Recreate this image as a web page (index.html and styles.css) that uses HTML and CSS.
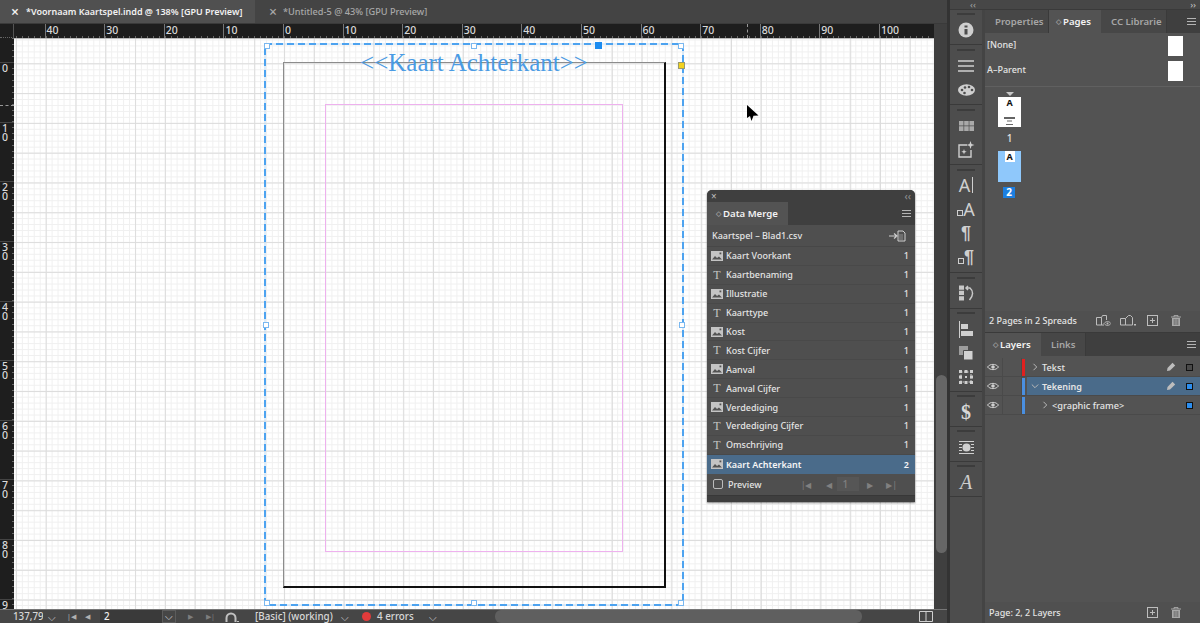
FILE: index.html
```html
<!DOCTYPE html>
<html lang="en">
<head>
    <meta charset="UTF-8">
    <title>Voornaam Kaartspel.indd</title>
    <link rel="stylesheet" href="styles.css">
</head>
<body>
    <svg class="defs" width="0" height="0">
        <symbol id="i-image" viewBox="0 0 12 10">
            <rect width="12" height="10" fill="#c4c4c4"/>
            <path d="M1 8.500 4 5l2 2 2-1.500 3 3z" fill="#535353"/>
            <rect x="8.500" y="1.500" width="1.800" height="1.800" fill="#535353"/>
        </symbol>
        <symbol id="i-eye" viewBox="0 0 12 8">
            <path d="M.5 4C3 .5 9 .5 11.500 4 9 7.500 3 7.500.5 4z" fill="none" stroke="#d0d0d0"/>
            <circle cx="6" cy="4" r="1.800" fill="#d0d0d0"/>
        </symbol>
        <symbol id="i-pen" viewBox="0 0 10 10">
            <path d="M1 9 1.500 6 6.500.8 9.200 3.500 4 8.500z" fill="#bdbdbd"/>
        </symbol>
        <symbol id="i-plus" viewBox="0 0 11 11">
            <rect x=".5" y=".5" width="10" height="10" fill="none" stroke="#bdbdbd"/>
            <path d="M5.500 3v5M3 5.500h5" stroke="#bdbdbd"/>
        </symbol>
        <symbol id="i-trash" viewBox="0 0 10 11">
            <path d="M0 2h10M3 2V.6h4V2" fill="none" stroke="#a8a8a8"/>
            <path d="M1 3h8v8H1z" fill="#a8a8a8"/>
            <path d="M3.200 4v6M5 4v6M6.800 4v6" stroke="#535353" stroke-width=".7"/>
        </symbol>
        <symbol id="i-chev" viewBox="0 0 6 8">
            <path d="M1.500 .8 4.700 4 1.500 7.200" fill="none" stroke="#b8b8b8"/>
        </symbol>
    </svg>

    <div class="app">
        <main class="doc">
            <div class="doc-tabs">
                <div class="doc-tab active"><span class="tab-x">×</span>*Voornaam Kaartspel.indd @ 138% [GPU Preview]</div>
                <div class="doc-tab"><span class="tab-x">×</span>*Untitled-5 @ 43% [GPU Preview]</div>
            </div>

            <div class="doc-body">
                <div class="doc-view">
                    <div class="ruler-top">
                        <div class="ruler-corner"></div>
                        <div class="ruler-marks">
                            <span>40</span><span>30</span><span>20</span><span>10</span><span>0</span>
                            <span>10</span><span>20</span><span>30</span><span>40</span><span>50</span>
                            <span>60</span><span>70</span><span>80</span><span>90</span><span>100</span>
                        </div>
                        <i class="ruler-cursor-x"></i>
                    </div>
                    <div class="doc-row">
                        <div class="ruler-left">
                            <span>0</span><span>10</span><span>20</span><span>30</span><span>40</span>
                            <span>50</span><span>60</span><span>70</span><span>80</span><span>90</span>
                            <i class="ruler-cursor-y"></i>
                        </div>
                        <div class="canvas">
                            <div class="page"></div>
                            <div class="margin-box"></div>
                            <div class="frame">
                                <svg class="frame-line" width="420" height="563">
                                    <rect x="1" y="1" width="418" height="561" fill="none" stroke="#bcdcf8" stroke-width="1"/>
                                    <rect x="1" y="1" width="418" height="561" fill="none" stroke="#4da3f0" stroke-width="2" stroke-dasharray="7 4"/>
                                </svg>
                                <div class="frame-text">&lt;&lt;Kaart Achterkant&gt;&gt;</div>
                                <i class="handle h-tl"></i><i class="handle h-tm"></i><i class="handle h-tr"></i>
                                <i class="handle h-ml"></i><i class="handle h-mr"></i>
                                <i class="handle h-bl"></i><i class="handle h-bm"></i><i class="handle h-br"></i>
                                <i class="handle-ref"></i>
                                <i class="handle-port"></i>
                            </div>
                            <svg class="cursor" width="12" height="17" viewBox="0 0 12 17"><path d="M0 0 11.500 10.500 6.500 10.800 4.500 16 3 11 0 13z" fill="#000"/></svg>

                            <section class="merge">
                                <div class="merge-title"><span class="x">×</span><span class="chev">‹‹</span></div>
                                <div class="panel-tabs">
                                    <div class="panel-tab active merge-tab"><span class="updown">◇</span>Data Merge</div>
                                    <div class="panel-menu"><b></b></div>
                                </div>
                                <div class="merge-file">
                                    <span>Kaartspel – Blad1.csv</span>
                                    <svg width="17" height="12" viewBox="0 0 17 12"><path d="M0 6h7M5 3.500 8 6 5 8.500" fill="none" stroke="#cfcfcf" stroke-width="1.200"/><path d="M9 1h5l2 2v8H9z" fill="none" stroke="#cfcfcf"/><path d="M10.500 5h4M10.500 7h4M10.500 9h4" stroke="#cfcfcf" stroke-dasharray="1 1"/></svg>
                                </div>
                                <div class="merge-row"><svg class="ic" width="12" height="10"><use href="#i-image"/></svg><span class="name">Kaart Voorkant</span><span>1</span></div>
                                <div class="merge-row"><span class="ic t">T</span><span class="name">Kaartbenaming</span><span>1</span></div>
                                <div class="merge-row"><svg class="ic" width="12" height="10"><use href="#i-image"/></svg><span class="name">Illustratie</span><span>1</span></div>
                                <div class="merge-row"><span class="ic t">T</span><span class="name">Kaarttype</span><span>1</span></div>
                                <div class="merge-row"><svg class="ic" width="12" height="10"><use href="#i-image"/></svg><span class="name">Kost</span><span>1</span></div>
                                <div class="merge-row"><span class="ic t">T</span><span class="name">Kost Cijfer</span><span>1</span></div>
                                <div class="merge-row"><svg class="ic" width="12" height="10"><use href="#i-image"/></svg><span class="name">Aanval</span><span>1</span></div>
                                <div class="merge-row"><span class="ic t">T</span><span class="name">Aanval Cijfer</span><span>1</span></div>
                                <div class="merge-row"><svg class="ic" width="12" height="10"><use href="#i-image"/></svg><span class="name">Verdediging</span><span>1</span></div>
                                <div class="merge-row"><span class="ic t">T</span><span class="name">Verdediging Cijfer</span><span>1</span></div>
                                <div class="merge-row"><span class="ic t">T</span><span class="name">Omschrijving</span><span>1</span></div>
                                <div class="merge-row selected"><svg class="ic" width="12" height="10"><use href="#i-image"/></svg><span class="name">Kaart Achterkant</span><span>2</span></div>
                                <div class="merge-preview">
                                    <i class="checkbox"></i><span class="preview-label">Preview</span>
                                    <div class="pager">
                                        <span class="pager-first">|◀</span><span>◀</span><span class="pager-num">1</span><span class="pager-next">▶</span><span>▶|</span>
                                    </div>
                                </div>
                                <div class="merge-grip"></div>
                            </section>
                        </div>
                    </div>
                </div>
                <div class="vscroll"><div class="vscroll-thumb"></div></div>
            </div>

            <footer class="status">
                <span class="zoom-val">137,79</span><span class="st-chev">⌵</span>
                <span class="st-nav first">|◀</span><span class="st-nav">◀</span>
                <span class="page-input">2</span><span class="page-drop">⌵</span>
                <span class="st-nav dim">▶</span><span class="st-nav dim">▶|</span>
                <svg class="gauge" width="14" height="12" viewBox="0 0 14 12"><path d="M1.500 11V7a4.500 4.500 0 0 1 9 0v4" fill="none" stroke="#c0c0c0" stroke-width="2"/><rect x="12" y="10" width="2" height="1" fill="#c0c0c0"/></svg>
                <span class="preflight-name">[Basic] (working)</span><span class="st-chev c2">⌵</span>
                <i class="err-dot"></i><span class="err-text">4 errors</span><span class="st-chev c3">⌵</span>
                <div class="hscroll"></div>
                <svg class="spread-ic" width="14" height="11" viewBox="0 0 14 11"><path d="M.5.5h13v10H.5zM7 .5v10" fill="none" stroke="#d0d0d0"/></svg>
            </footer>
        </main>

        <div class="dock-edge"></div>

        <aside class="dock">
            <div class="dock-top"><span class="chev-l">‹‹</span><span class="chev-r">››</span></div>
            <div class="dock-main">
                <nav class="strip">
                    <div class="group">
                        <div class="tool"><svg width="16" height="16" viewBox="0 0 16 16"><circle cx="8" cy="8" r="7.500" fill="#cfcfcf"/><path d="M6.500 3.500h3v2h-3zM6.500 7h3v5.500h-3z" fill="#4d4d4d"/></svg></div>
                    </div>
                    <div class="group">
                        <div class="tool"><svg width="16" height="12" viewBox="0 0 16 12"><path d="M0 1h16M0 6h16M0 11h16" stroke="#d0d0d0" stroke-width="1.600"/></svg></div>
                        <div class="tool"><svg width="17" height="12" viewBox="0 0 17 12"><ellipse cx="8.500" cy="6" rx="8.500" ry="5.800" fill="#cfcfcf"/><circle cx="4" cy="6" r="1.300" fill="#4d4d4d"/><circle cx="7" cy="3.500" r="1.300" fill="#4d4d4d"/><circle cx="11" cy="3" r="1.300" fill="#4d4d4d"/><circle cx="6.500" cy="9" r="1.300" fill="#4d4d4d"/><circle cx="14" cy="6" r="1.300" fill="#4d4d4d"/></svg></div>
                    </div>
                    <div class="group">
                        <div class="tool"><svg width="15" height="10" viewBox="0 0 15 10"><path d="M0 0h4.500v4.500H0zM5.200 0h4.500v4.500H5.200zM10.400 0H15v4.500h-4.600zM0 5.300h4.500V10H0zM5.200 5.300h4.500V10H5.200zM10.400 5.300H15V10h-4.600z" fill="#a9a9a9"/></svg></div>
                        <div class="tool up"><svg width="17" height="17" viewBox="0 0 17 17"><path d="M9 4H1v12h12V9" fill="none" stroke="#cfcfcf" stroke-width="1.400"/><path d="M12.500 0l1 3 3 1-3 1-1 3-1-3-3-1 3-1zM6 8l.7 2 2 .7-2 .7-.7 2-.7-2-2-.7 2-.7z" fill="#cfcfcf"/></svg></div>
                    </div>
                    <div class="group">
                        <div class="tool glyph a-bar up">A<i></i></div>
                        <div class="tool glyph small-a up"><b></b>A</div>
                        <div class="tool glyph pilcrow up">¶</div>
                        <div class="tool glyph small-a pil up"><b></b>¶</div>
                    </div>
                    <div class="group tight">
                        <div class="tool up"><svg width="15" height="16" viewBox="0 0 15 16"><path d="M0 .5h5v4.200H0zM0 5.800h5V10H0zM0 11.200h5v4.300H0z" fill="#c8c8c8"/><path d="M7 3h4c3.500 3 3.500 7.500-.5 12M9 1l-2 2 2 2" fill="none" stroke="#c8c8c8" stroke-width="1.500"/></svg></div>
                    </div>
                    <div class="group tight">
                        <div class="tool"><svg width="14" height="17" viewBox="0 0 14 17"><path d="M.5 0v17" stroke="#cfcfcf"/><path d="M2 3h7v5H2zM2 10h12v5H2z" fill="#cfcfcf"/></svg></div>
                        <div class="tool"><svg width="14" height="14" viewBox="0 0 14 14"><path d="M0 0h9v9H0z" fill="#9d9d9d"/><path d="M4.500 4.500H14V14H4.500z" fill="#d2d2d2" stroke="#4d4d4d"/></svg></div>
                        <div class="tool"><svg width="14" height="14" viewBox="0 0 14 14"><path d="M2 2h10v10H2z" fill="none" stroke="#cfcfcf" stroke-dasharray="1.500 1.500"/><path d="M0 0h3v3H0zM5.500 0h3v3h-3zM11 0h3v3h-3zM0 5.500h3v3H0zM11 5.500h3v3h-3zM0 11h3v3H0zM5.500 11h3v3h-3zM11 11h3v3h-3zM6 6h2v2H6z" fill="#cfcfcf"/></svg></div>
                    </div>
                    <div class="group tight">
                        <div class="tool glyph dollar">$</div>
                    </div>
                    <div class="group tight">
                        <div class="tool"><svg width="15" height="13" viewBox="0 0 15 13"><path d="M0 .5h15M0 12.500h15M0 3.500h3M12 3.500h3M0 6.500h3M12 6.500h3M0 9.500h3M12 9.500h3" stroke="#cfcfcf"/><circle cx="7.500" cy="6.500" r="4" fill="#cfcfcf"/></svg></div>
                    </div>
                    <div class="group tight">
                        <div class="tool glyph script">A</div>
                    </div>
                </nav>

                <div class="panels">
                    <section class="pages">
                        <div class="panel-tabs">
                            <div class="panel-tab w-props">Properties</div>
                            <div class="panel-tab active w-pages"><span class="updown">◇</span>Pages</div>
                            <div class="panel-tab w-cc">CC Librarie</div>
                            <div class="panel-menu"><b></b></div>
                        </div>
                        <div class="parents">
                            <div class="parent-row"><span>[None]</span><i class="parent-thumb"></i></div>
                            <div class="parent-row"><span>A–Parent</span><i class="parent-thumb"></i></div>
                        </div>
                        <div class="spreads">
                            <i class="page-marker"></i>
                            <div class="thumb">
                                <span>A</span>
                                <svg class="thumb-lines" width="11" height="9" viewBox="0 0 11 9"><path d="M0 1h11" stroke="#222" stroke-width="1.400"/><path d="M3 4h5M2 7.500h7" stroke="#666"/></svg>
                            </div>
                            <div class="thumb-num">1</div>
                            <div class="thumb current"><span>A</span></div>
                            <div class="thumb-num current">2</div>
                        </div>
                        <div class="panel-foot raised">
                            <span>2 Pages in 2 Spreads</span>
                            <div class="foot-icons">
                                <svg class="foot-first" width="15" height="11" viewBox="0 0 15 11"><path d="M.5 10V2.500h5l1-2h4V5M.5 10H8M5.500 2.500V10" fill="none" stroke="#bdbdbd"/><path d="M8 8.500c2-2.500 5-2.500 7 0-2 2.500-5 2.500-7 0z" fill="none" stroke="#bdbdbd"/><circle cx="11.500" cy="8.500" r="1" fill="#bdbdbd"/></svg>
                                <svg width="16" height="11" viewBox="0 0 16 11"><path d="M.5 10V3.500h5v6.500zM5.500 3.500l3-3h2l2 2v7.500h-7" fill="none" stroke="#bdbdbd"/><rect x="14" y="9" width="2" height="1.500" fill="#bdbdbd"/></svg>
                                <svg class="foot-plus" width="11" height="11"><use href="#i-plus"/></svg>
                                <svg width="10" height="11"><use href="#i-trash"/></svg>
                            </div>
                        </div>
                    </section>

                    <section class="layers">
                        <div class="panel-tabs">
                            <div class="panel-tab active w-layers"><span class="updown">◇</span>Layers</div>
                            <div class="panel-tab w-links">Links</div>
                            <div class="panel-menu"><b></b></div>
                        </div>
                        <div class="layer-list">
                            <div class="layer-row">
                                <svg class="eye" width="12" height="8"><use href="#i-eye"/></svg><i class="lock-cell"></i>
                                <i class="layer-color red"></i><svg class="twist" width="6" height="8"><use href="#i-chev"/></svg><span class="layer-name">Tekst</span>
                                <svg class="pen" width="10" height="10"><use href="#i-pen"/></svg><i class="layer-sq dark"></i>
                            </div>
                            <div class="layer-row selected">
                                <svg class="eye" width="12" height="8"><use href="#i-eye"/></svg><i class="lock-cell"></i>
                                <i class="layer-color blue"></i><svg class="twist down" width="6" height="8"><use href="#i-chev"/></svg><span class="layer-name bold">Tekening</span>
                                <svg class="pen" width="10" height="10"><use href="#i-pen"/></svg><i class="layer-sq"></i>
                            </div>
                            <div class="layer-row">
                                <svg class="eye" width="12" height="8"><use href="#i-eye"/></svg><i class="lock-cell"></i>
                                <i class="layer-color blue"></i><svg class="twist sub" width="6" height="8"><use href="#i-chev"/></svg><span class="layer-name">&lt;graphic frame&gt;</span>
                                <i class="layer-sq"></i>
                            </div>
                        </div>
                        <div class="panel-foot">
                            <span>Page: 2, 2 Layers</span>
                            <div class="foot-icons">
                                <svg class="foot-plus" width="11" height="11"><use href="#i-plus"/></svg>
                                <svg width="10" height="11"><use href="#i-trash"/></svg>
                            </div>
                        </div>
                    </section>
                </div>
            </div>
        </aside>
    </div>
</body>
</html>
```

FILE: styles.css
```css
* {
    box-sizing: border-box;
}
html, body {
    margin: 0;
    height: 100%;
    overflow: hidden;
}
body {
    font-family: "Noto Sans", sans-serif;
    font-size: 9px;
    font-weight: 500;
    color: #e4e4e4;
    background-color: #535353;
}
i {
    display: block;
}
.defs {
    position: absolute;
}
.app {
    display: flex;
    width: 1200px;
    height: 623px;
}

/* document window */
.doc {
    width: 947px;
    display: flex;
    flex-direction: column;
    background-color: #444;
}
.doc-tabs {
    height: 24px;
    display: flex;
    background-color: #444;
    border-bottom: 1px solid #3a3a3a;
}
.doc-tab {
    width: 185px;
    padding-left: 14px;
    display: flex;
    align-items: center;
    font-size: 9.2px;
    color: #a8a8a8;
    white-space: nowrap;
}
.doc-tab.active {
    width: 255px;
    padding-left: 11px;
    font-size: 9px;
    font-weight: 600;
    background-color: #505050;
    color: #f2f2f2;
}
.doc-tab .tab-x {
    width: 14px;
    font-size: 14px;
    line-height: 14px;
}
.doc-tab.active .tab-x {
    width: 15px;
}
.doc-body {
    flex: 1;
    display: flex;
    min-height: 0;
}
.doc-view {
    width: 934px;
    display: flex;
    flex-direction: column;
    background-color: #1e1e1e;
}

/* rulers */
.ruler-top {
    position: relative;
    height: 14px;
    display: flex;
    background-color: #1e1e1e;
    overflow: hidden;
}
.ruler-corner {
    width: 14px;
    flex: none;
    border-right: 1px solid #555;
    border-bottom: 1px dotted #666;
}
.ruler-marks {
    display: flex;
    padding-left: 30.6px;
    background-image: repeating-linear-gradient(to right, #666 0, #666 1px, transparent 1px, transparent 5.96px);
    background-size: 100% 2px;
    background-position: 1.9px bottom;
    background-repeat: no-repeat;
}
.ruler-marks span {
    flex: none;
    width: 59.6px;
    padding-left: 1px;
    border-left: 1px solid #777;
    line-height: 13px;
    font-size: 10.5px;
    color: #dadada;
}
.ruler-cursor-x {
    position: absolute;
    left: 747px;
    top: 0;
    height: 14px;
    border-left: 1px dashed #999;
}
.doc-row {
    flex: 1;
    display: flex;
    min-height: 0;
}
.ruler-left {
    position: relative;
    width: 14px;
    flex: none;
    padding-top: 24.3px;
    background-color: #1e1e1e;
    background-image: repeating-linear-gradient(to bottom, #666 0, #666 1px, transparent 1px, transparent 5.96px);
    background-size: 2px 100%;
    background-position: right 0.3px;
    background-repeat: no-repeat;
    overflow: hidden;
}
.ruler-left span {
    display: block;
    height: 59.6px;
    width: 14px;
    padding: 1px 6px 0 2px;
    font-size: 10.5px;
    line-height: 9px;
    color: #dadada;
    word-break: break-all;
    border-top: 1px solid #444;
}
.ruler-cursor-y {
    position: absolute;
    left: 0;
    top: 67px;
    width: 14px;
    border-top: 1px dashed #999;
}

/* pasteboard */
.canvas {
    position: relative;
    flex: 1;
    background-color: #fff;
    background-image:
        linear-gradient(to right, #dcdcdc 1px, transparent 1px),
        linear-gradient(to bottom, #dcdcdc 1px, transparent 1px),
        linear-gradient(to right, #f0f0f0 1px, transparent 1px),
        linear-gradient(to bottom, #f0f0f0 1px, transparent 1px);
    background-size: 29.8px 29.8px, 29.8px 29.8px, 5.96px 5.96px, 5.96px 5.96px;
    background-position: 1.9px 24.3px, 1.9px 24.3px, 1.9px 24.3px, 1.9px 24.3px;
    border-top: 1px solid #bbb;
    overflow: hidden;
}
.page {
    position: absolute;
    left: 269px;
    top: 23px;
    width: 383px;
    height: 526px;
    border-top: 1px solid #8c8c8c;
    border-left: 1px solid #8c8c8c;
    border-right: 2px solid #111;
    border-bottom: 2px solid #111;
}
.margin-box {
    position: absolute;
    left: 311px;
    top: 65px;
    width: 298px;
    height: 448px;
    border: 1px solid #eeb1ee;
}
.frame {
    position: absolute;
    left: 250px;
    top: 4px;
    width: 420px;
    height: 563px;
}
.frame-line {
    display: block;
}
.frame-text {
    position: absolute;
    left: 0;
    right: 0;
    top: 5px;
    text-align: center;
    font-family: "Liberation Serif", serif;
    font-size: 25px;
    font-weight: 400;
    line-height: 30px;
    color: #4a9be4;
    white-space: nowrap;
}
.handle {
    position: absolute;
    width: 6px;
    height: 6px;
    background-color: #fff;
    border: 1px solid #7ab8f0;
}
.h-tl { left: 0; top: 0; }
.h-tm { left: 207px; top: 0; }
.h-tr { right: 0; top: 0; }
.h-ml { left: -1px; top: 279px; }
.h-mr { right: -1px; top: 279px; }
.h-bl { left: 0; bottom: 0; }
.h-bm { left: 207px; bottom: 0; }
.h-br { right: 0; bottom: 0; }
.handle-ref {
    position: absolute;
    left: 331px;
    top: -1px;
    width: 7px;
    height: 7px;
    background-color: #1c8cf0;
}
.handle-port {
    position: absolute;
    right: -1px;
    top: 19px;
    width: 7px;
    height: 7px;
    background-color: #f2d21e;
    border: 1px solid #9a9a6a;
}
.cursor {
    position: absolute;
    left: 733px;
    top: 66px;
}

/* shared panel bits */
.panel-tabs {
    height: 23px;
    display: flex;
    background-color: #3f3f3f;
}
.panel-tab {
    display: flex;
    align-items: center;
    font-size: 9.6px;
    font-weight: 600;
    color: #a6a6a6;
    background-color: #474747;
    border-right: 1px solid #3a3a3a;
    white-space: nowrap;
    overflow: hidden;
}
.panel-tab.active {
    background-color: #535353;
    color: #f4f4f4;
    border-right: 0;
}
.updown {
    width: 5px;
    margin-right: 2px;
    font-size: 7px;
    color: #9c9c9c;
}
.panel-menu {
    flex: 1;
    display: flex;
    justify-content: flex-end;
    align-items: center;
    padding-right: 4px;
}
.panel-menu b {
    width: 9px;
    height: 7px;
    border-top: 1px solid #b4b4b4;
    border-bottom: 1px solid #b4b4b4;
    background: linear-gradient(#b4b4b4, #b4b4b4) center / 100% 1px no-repeat;
}

/* data merge panel */
.merge {
    position: absolute;
    left: 693px;
    top: 151px;
    width: 208px;
    height: 312px;
    background-color: #4f4f4f;
    border-radius: 5px 5px 0 0;
    box-shadow: 0 1px 2px rgba(0, 0, 0, 0.5);
    overflow: hidden;
}
.merge-title {
    height: 12px;
    display: flex;
    justify-content: space-between;
    align-items: center;
    padding: 0 4px;
    background-color: #3f3f3f;
    color: #b5b5b5;
    font-size: 10px;
    line-height: 12px;
}
.merge-title .chev {
    color: #8c8c8c;
}
.merge-tab {
    width: 81px;
    padding-left: 9px;
}
.merge-file {
    height: 22px;
    display: flex;
    justify-content: space-between;
    align-items: center;
    padding: 0 9px 0 5px;
    border-bottom: 1px solid #474747;
}
.merge-row {
    height: 18.9px;
    display: flex;
    align-items: center;
    padding: 0 6px 0 4px;
    border-bottom: 1px solid #494949;
}
.merge-row .ic {
    width: 12px;
    flex: none;
}
.merge-row .t {
    font-family: "Liberation Serif", serif;
    font-size: 12px;
    line-height: 12px;
    text-align: center;
    color: #c4c4c4;
}
.merge-row .name {
    flex: 1;
    margin-left: 3px;
}
.merge-row.selected {
    background-color: #4a6b8a;
    border-bottom: 0;
    font-weight: 600;
    color: #f6f6f6;
}
.merge-preview {
    height: 21px;
    display: flex;
    align-items: center;
    padding-left: 6px;
}
.checkbox {
    width: 10px;
    height: 10px;
    border: 1px solid #bbb;
    border-radius: 2px;
}
.preview-label {
    margin-left: 5px;
    width: 73px;
}
.pager {
    display: flex;
    align-items: center;
    color: #808080;
    font-size: 8px;
    gap: 10px;
}
.pager-first {
    margin-right: 5px;
}
.pager-next {
    margin-right: 3px;
}
.pager-num {
    width: 22px;
    height: 14px;
    margin: 0 -2px 0 -5px;
    padding-left: 5px;
    line-height: 14px;
    font-size: 10px;
    background-color: #565656;
}
.merge-grip {
    height: 7px;
    background-color: #3f3f3f;
    border-top: 1px solid #383838;
}

/* scrollbars and status */
.vscroll {
    flex: 1;
    padding-top: 351px;
    padding-left: 2px;
    background-color: #3f3f3f;
}
.vscroll-thumb {
    height: 178px;
    background-color: #666;
    border-radius: 6px;
}
.status {
    height: 14px;
    display: flex;
    align-items: center;
    position: relative;
    background-color: #464646;
    border-top: 1px solid #777;
    color: #d8d8d8;
    font-size: 9.8px;
    white-space: nowrap;
}
.zoom-val {
    width: 30px;
    margin-left: 13px;
    overflow: hidden;
}
.st-chev {
    font-size: 10px;
    line-height: 10px;
    width: 10px;
    margin-left: 5px;
    color: #c8c8c8;
}
.st-nav {
    font-size: 7px;
    width: 10px;
    margin-left: 8px;
    color: #b0b0b0;
}
.st-nav.first {
    margin-left: 9px;
}
.st-nav.dim {
    margin-left: 8px;
    color: #7d7d7d;
}
.page-input {
    width: 62px;
    height: 13px;
    margin-left: 5px;
    padding-left: 4px;
    line-height: 13px;
    background-color: #3a3a3a;
    color: #eee;
}
.page-drop {
    width: 14px;
    height: 13px;
    line-height: 11px;
    text-align: center;
    border: 1px solid #5c5c5c;
    margin-right: 4px;
}
.gauge {
    margin-left: 9px;
}
.preflight-name {
    margin-left: 16px;
    width: 86px;
}
.st-chev.c2 {
    margin-left: 0;
}
.err-dot {
    width: 9px;
    height: 9px;
    margin-left: 11px;
    border-radius: 50%;
    background-color: #e23b3b;
}
.err-text {
    margin-left: 6px;
    width: 52px;
}
.st-chev.c3 {
    margin-left: 0;
}
.hscroll {
    width: 367px;
    height: 13px;
    margin-left: 56px;
    background-color: #5f5f5f;
    border-radius: 6px;
}
.spread-ic {
    margin-left: 57px;
}

/* dock */
.dock-edge {
    width: 3px;
    background-color: #333;
}
.dock {
    flex: 1;
    display: flex;
    flex-direction: column;
}
.dock-top {
    height: 10px;
    display: flex;
    padding: 0 4px 0 20px;
    justify-content: space-between;
    background-color: #474747;
    color: #9d9d9d;
    font-size: 9px;
    line-height: 9px;
    border-bottom: 1px solid #3a3a3a;
}
.chev-r {
    color: #bbb;
}
.dock-main {
    flex: 1;
    display: flex;
    min-height: 0;
}
.strip {
    width: 32px;
    flex: none;
    background-color: #4d4d4d;
}
.group {
    padding: 8px 0 2px;
    margin-bottom: 1px;
    background: linear-gradient(to right, #3c3c3c, #3c3c3c) center 3px / 18px 2px no-repeat;
    border-bottom: 1px solid #3a3a3a;
}
.group.tight {
    margin-bottom: 0;
}
.tool {
    position: relative;
    height: 24px;
    display: flex;
    align-items: center;
    justify-content: center;
}
.tool.up {
    padding-bottom: 2px;
}
.glyph {
    font-size: 18px;
    font-weight: 400;
    line-height: 20px;
    color: #cfcfcf;
}
.a-bar i {
    width: 1px;
    height: 16px;
    margin-left: 2px;
    background-color: #cfcfcf;
}
.small-a b {
    width: 6px;
    height: 6px;
    margin-top: 7px;
    border: 1px solid #cfcfcf;
}
.pilcrow, .pil {
    font-weight: 700;
    font-family: "Liberation Sans", sans-serif;
}
.dollar {
    font-family: "Liberation Serif", serif;
    font-weight: 700;
    font-size: 20px;
    color: #d8d8d8;
}
.script {
    font-family: "Liberation Serif", serif;
    font-style: italic;
    font-size: 20px;
}
.panels {
    flex: 1;
    display: flex;
    flex-direction: column;
    border-left: 3px solid #444;
    min-width: 0;
}
.pages {
    height: 323px;
    display: flex;
    flex-direction: column;
    border-bottom: 1px solid #3a3a3a;
}
.w-props { width: 64px; padding-left: 10px; }
.w-pages { width: 52px; padding-left: 7px; }
.w-cc { width: 66px; padding-left: 10px; }
.w-layers { width: 56px; padding-left: 8px; }
.w-links { width: 45px; padding-left: 10px; }
.parents {
    height: 54px;
    padding-left: 2px;
    border-bottom: 1px solid #606060;
}
.parent-row {
    height: 25px;
    display: flex;
    justify-content: space-between;
    align-items: center;
    padding-right: 17px;
}
.parent-row span {
    margin-top: -2px;
}
.parent-thumb {
    width: 15px;
    height: 20px;
    background-color: #fff;
}
.spreads {
    flex: 1;
    display: flex;
    flex-direction: column;
    align-items: flex-start;
    padding-left: 13px;
}
.page-marker {
    margin: 5px 0 1px 8px;
    width: 0;
    height: 0;
    border-left: 4px solid transparent;
    border-right: 4px solid transparent;
    border-top: 4px solid #c8c8c8;
}
.thumb {
    position: relative;
    width: 23px;
    height: 30px;
    background-color: #fff;
    text-align: center;
    color: #111;
    font-size: 9px;
    font-weight: 700;
    line-height: 11px;
}
.thumb.current {
    height: 31px;
    margin-top: 6px;
    background-color: #8fc8fb;
}
.thumb.current span {
    display: inline-block;
    width: 10px;
    background-color: #fff;
}
.thumb-lines {
    position: absolute;
    left: 6px;
    top: 20px;
}
.thumb-num {
    width: 23px;
    margin-top: 5px;
    text-align: center;
    font-size: 10px;
    line-height: 13px;
}
.thumb-num.current {
    width: 12px;
    height: 11px;
    margin: 5px 0 0 5px;
    line-height: 11px;
    background-color: #1c7fe0;
    color: #fff;
    font-weight: 700;
}
.panel-foot {
    height: 21px;
    flex: none;
    display: flex;
    justify-content: space-between;
    align-items: center;
    padding: 0 5px 0 4px;
    background-color: #505050;
}
.panel-foot.raised {
    padding-bottom: 3px;
}
.foot-icons {
    display: flex;
    align-items: center;
    gap: 11px;
    padding-right: 14px;
}
.foot-first {
    margin-right: -2px;
}
.foot-plus {
    margin-right: 2px;
}
.layers {
    flex: 1;
    display: flex;
    flex-direction: column;
    min-height: 0;
}
.layer-list {
    flex: 1;
    padding-top: 2px;
}
.layer-row {
    height: 19px;
    display: flex;
    align-items: center;
    padding-right: 7px;
    font-size: 9.2px;
    border-bottom: 1px solid #4a4a4a;
}
.layer-row.selected {
    background: linear-gradient(to right, #535353 42px, #4a6b8a 42px);
}
.eye {
    margin-left: 2px;
}
.lock-cell {
    width: 20px;
    height: 100%;
    margin-left: 3px;
    border-left: 1px solid #4a4a4a;
    border-right: 1px solid #4a4a4a;
}
.layer-color {
    width: 3px;
    height: 17px;
    flex: none;
}
.layer-color.red { background-color: #e0201f; }
.layer-color.blue { background-color: #4a8fe0; }
.twist {
    flex: none;
    margin: 0 4px 0 7px;
}
.twist.down {
    transform: rotate(90deg);
}
.twist.sub {
    margin-left: 17px;
}
.layer-name {
    flex: 1;
}
.layer-name.bold {
    font-weight: 600;
    font-size: 9px;
}
.pen {
    margin-right: 10px;
}
.layer-sq {
    width: 7px;
    height: 7px;
    background-color: #2b8ef0;
    border: 1px solid #111;
}
.layer-sq.dark {
    background-color: #4a4a4a;
}
```
